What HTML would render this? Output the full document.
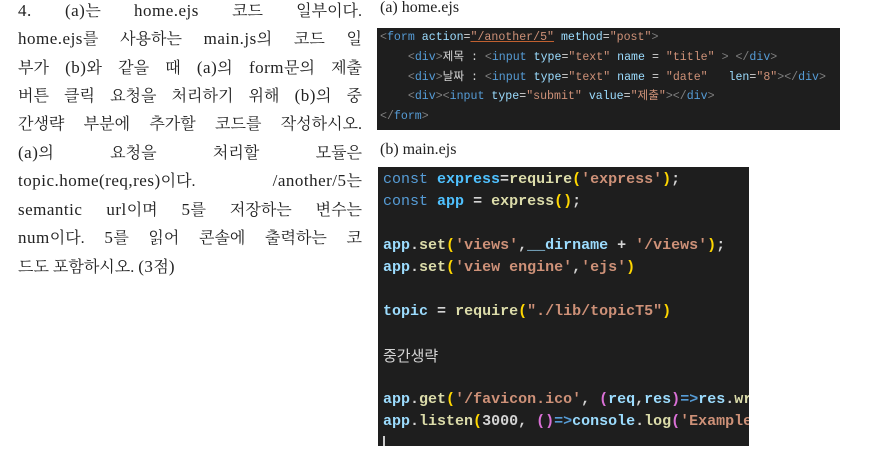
<!DOCTYPE html>
<html><head><meta charset="utf-8"><style>
html,body{margin:0;padding:0;background:#fff;width:870px;height:462px;overflow:hidden;position:relative}
.q{position:absolute;left:18px;top:-3px;width:344px;font-family:"Liberation Serif","Noto Serif CJK SC",serif;font-size:16px;color:#222}
.q div{height:28.4px;line-height:28.4px;text-align:justify;text-align-last:justify;white-space:nowrap}
.q div.l{text-align-last:left}
.q i{font-style:normal;font-size:17px;letter-spacing:0.5px}
.lab{position:absolute;font-family:"Liberation Serif","Noto Serif CJK SC",serif;font-size:16px;color:#222}
.box{position:absolute;background:#1e1e1e;font-family:"Liberation Mono","Noto Sans CJK KR",monospace;white-space:pre}
.a{left:377px;top:28px;width:463px;height:102px;font-size:11.6px;line-height:19.8px}
.a .ln{padding-left:3px}
.b{left:378px;top:167px;width:371px;height:279px;font-size:15px;line-height:22px;font-weight:bold;overflow:hidden}
.b .ln{padding-left:5px;height:22px}
.t{color:#808080}.n{color:#569cd6}.at{color:#9cdcfe}.s{color:#ce9178}.w{color:#d4d4d4}
.k{color:#569cd6;font-weight:normal}.v{color:#4fc1ff}.f{color:#dcdcaa}.p{color:#ffd700}.pp{color:#da70d6}.ko{color:#d4d4d4;font-family:"Noto Sans CJK KR",sans-serif;font-weight:normal}
</style></head><body>
<div class="q">
<div><i>4.</i> <i>(a)</i>는 <i>home.ejs</i> 코드 일부이다.</div>
<div><i>home.ejs</i>를 사용하는 <i>main.js</i>의 코드 일</div>
<div>부가 <i>(b)</i>와 같을 때 <i>(a)</i>의 <i>form</i>문의 제출</div>
<div>버튼 클릭 요청을 처리하기 위해 <i>(b)</i>의 중</div>
<div>간생략 부분에 추가할 코드를 작성하시오.</div>
<div><i>(a)</i>의 요청을 처리할 모듈은</div>
<div><i>topic.home(req,res)</i>이다. <i>/another/5</i>는</div>
<div><i>semantic</i> <i>url</i>이며 <i>5</i>를 저장하는 변수는</div>
<div><i>num</i>이다. <i>5</i>를 읽어 콘솔에 출력하는 코</div>
<div class="l">드도 포함하시오. <i>(3</i>점<i>)</i></div>
</div>
<div class="lab" style="left:380px;top:-1px">(a) home.ejs</div>
<div class="lab" style="left:380px;top:141px">(b) main.ejs</div>
<div class="box a"><div class="ln"><span class="t">&lt;</span><span class="n">form</span> <span class="at">action</span><span class="w">=</span><span class="s" style="text-decoration:underline;text-decoration-color:#c06030">"/another/5"</span> <span class="at">method</span><span class="w">=</span><span class="s">"post"</span><span class="t">&gt;</span></div><div class="ln">    <span class="t">&lt;</span><span class="n">div</span><span class="t">&gt;</span><span class="w">제목 : </span><span class="t">&lt;</span><span class="n">input</span> <span class="at">type</span><span class="w">=</span><span class="s">"text"</span> <span class="at">name</span> <span class="w">=</span> <span class="s">"title"</span> <span class="t">&gt; &lt;/</span><span class="n">div</span><span class="t">&gt;</span></div><div class="ln">    <span class="t">&lt;</span><span class="n">div</span><span class="t">&gt;</span><span class="w">날짜 : </span><span class="t">&lt;</span><span class="n">input</span> <span class="at">type</span><span class="w">=</span><span class="s">"text"</span> <span class="at">name</span> <span class="w">=</span> <span class="s">"date"</span>   <span class="at">len</span><span class="w">=</span><span class="s">"8"</span><span class="t">&gt;&lt;/</span><span class="n">div</span><span class="t">&gt;</span></div><div class="ln">    <span class="t">&lt;</span><span class="n">div</span><span class="t">&gt;&lt;</span><span class="n">input</span> <span class="at">type</span><span class="w">=</span><span class="s">"submit"</span> <span class="at">value</span><span class="w">=</span><span class="s">"제출"</span><span class="t">&gt;&lt;/</span><span class="n">div</span><span class="t">&gt;</span></div><div class="ln"><span class="t">&lt;/</span><span class="n">form</span><span class="t">&gt;</span></div></div>
<div class="box b"><div class="ln" style="margin-top:2px"><span class="k">const</span> <span class="v">express</span><span class="w">=</span><span class="f">require</span><span class="p">(</span><span class="s">'express'</span><span class="p">)</span><span class="w">;</span></div><div class="ln"><span class="k">const</span> <span class="v">app</span> <span class="w">=</span> <span class="f">express</span><span class="p">()</span><span class="w">;</span></div><div class="ln"></div><div class="ln"><span class="at">app</span><span class="w">.</span><span class="f">set</span><span class="p">(</span><span class="s">'views'</span><span class="w">,</span><span class="at">__dirname</span> <span class="w">+</span> <span class="s">'/views'</span><span class="p">)</span><span class="w">;</span></div><div class="ln"><span class="at">app</span><span class="w">.</span><span class="f">set</span><span class="p">(</span><span class="s">'view engine'</span><span class="w">,</span><span class="s">'ejs'</span><span class="p">)</span></div><div class="ln"></div><div class="ln"><span class="at">topic</span> <span class="w">=</span> <span class="f">require</span><span class="p">(</span><span class="s">"./lib/topicT5"</span><span class="p">)</span></div><div class="ln"></div><div class="ln"><span class="ko">중간생략</span></div><div class="ln"></div><div class="ln"><span class="at">app</span><span class="w">.</span><span class="f">get</span><span class="p">(</span><span class="s">'/favicon.ico'</span><span class="w">, </span><span class="pp">(</span><span class="at">req</span><span class="w">,</span><span class="at">res</span><span class="pp">)</span><span class="n">=&gt;</span><span class="at">res</span><span class="w">.</span><span class="f">wr</span></div><div class="ln"><span class="at">app</span><span class="w">.</span><span class="f">listen</span><span class="p">(</span><span class="w">3000, </span><span class="pp">()</span><span class="n">=&gt;</span><span class="at">console</span><span class="w">.</span><span class="f">log</span><span class="pp">(</span><span class="s">'Example</span></div><div class="ln"><span style="display:inline-block;width:2px;height:14px;background:#ccc;vertical-align:middle"></span></div></div>
</body></html>
